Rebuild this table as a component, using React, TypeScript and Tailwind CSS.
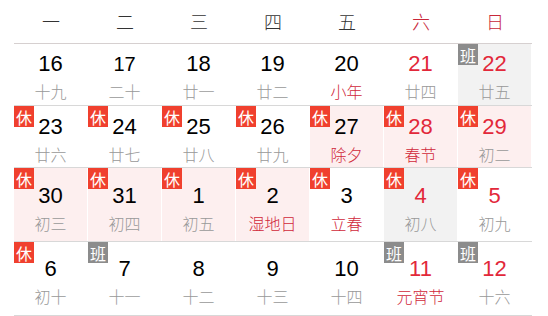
import React from "react";

type Cell = {
  d: string;
  l: string;
  badge?: "休" | "班";
  bg?: "pink" | "gray";
  red?: boolean;
  fest?: boolean;
  small?: boolean;
};

const rows: { h: string; pt: string; cells: Cell[] }[] = [
  {
    h: "h-[62px]",
    pt: "pt-[8px]",
    cells: [
      { d: "16", l: "十九" },
      { d: "17", l: "二十", small: true },
      { d: "18", l: "廿一" },
      { d: "19", l: "廿二" },
      { d: "20", l: "小年", fest: true },
      { d: "21", l: "廿四", red: true },
      { d: "22", l: "廿五", red: true, badge: "班", bg: "gray" },
    ],
  },
  {
    h: "h-[62px]",
    pt: "pt-[9px]",
    cells: [
      { d: "23", l: "廿六", badge: "休" },
      { d: "24", l: "廿七", badge: "休" },
      { d: "25", l: "廿八", badge: "休" },
      { d: "26", l: "廿九", badge: "休" },
      { d: "27", l: "除夕", badge: "休", bg: "pink", fest: true },
      { d: "28", l: "春节", badge: "休", bg: "pink", fest: true, red: true },
      { d: "29", l: "初二", badge: "休", bg: "pink", red: true },
    ],
  },
  {
    h: "h-[74px]",
    pt: "pt-[16px]",
    cells: [
      { d: "30", l: "初三", badge: "休", bg: "pink" },
      { d: "31", l: "初四", badge: "休", bg: "pink" },
      { d: "1", l: "初五", badge: "休", bg: "pink" },
      { d: "2", l: "湿地日", badge: "休", bg: "pink", fest: true },
      { d: "3", l: "立春", badge: "休", fest: true },
      { d: "4", l: "初八", badge: "休", bg: "gray", red: true },
      { d: "5", l: "初九", badge: "休", red: true },
    ],
  },
  {
    h: "h-[74px]",
    pt: "pt-[15px]",
    cells: [
      { d: "6", l: "初十", badge: "休" },
      { d: "7", l: "十一", badge: "班" },
      { d: "8", l: "十二" },
      { d: "9", l: "十三" },
      { d: "10", l: "十四" },
      { d: "11", l: "元宵节", badge: "班", red: true, fest: true },
      { d: "12", l: "十六", badge: "班", red: true },
    ],
  },
];

const heads = ["一", "二", "三", "四", "五", "六", "日"];

function DayCell({ c, pt }: { c: Cell; pt: string }) {
  const bg =
    c.bg === "pink" ? "bg-[#fdefef]" : c.bg === "gray" ? "bg-[#f2f2f2]" : "bg-white";
  return (
    <div className={`relative h-full border-r border-white ${bg} ${pt} flex flex-col items-center`}>
      {c.badge && (
        <div
          className={`absolute left-0 top-0 w-[20px] h-[21px] flex items-center justify-center text-[16px] leading-none text-white ${
            c.badge === "休" ? "bg-[#f0402e]" : "bg-[#8c8c8c]"
          }`}
          style={{ fontFamily: '"Noto Sans CJK SC", sans-serif' }}
        >
          {c.badge}
        </div>
      )}
      <div
        className={`h-[24px] leading-[24px] ${c.small ? "text-[20px]" : "text-[22px]"} ${
          c.red ? "text-[#e2283a]" : "text-black"
        }`}
        style={{ fontFamily: '"Liberation Sans", Arial, sans-serif' }}
      >
        {c.d}
      </div>
      <div
        className={`mt-[5px] h-[20px] leading-[20px] text-[16px] font-light ${
          c.fest ? "text-[#d0283a]" : "text-[#999]"
        }`}
        style={{ fontFamily: '"Noto Sans CJK SC", sans-serif' }}
      >
        {c.l}
      </div>
    </div>
  );
}

export default function App() {
  return (
    <div className="w-[548px] h-[316px] bg-white overflow-hidden">
      <div className="ml-[14px] w-[518px]">
        <div className="grid grid-cols-7 h-[44px] border-b border-[#d6d0d0]">
          {heads.map((h, i) => (
            <div
              key={h}
              className={`flex items-center justify-center text-[18px] font-light pb-[1px] ${
                i >= 5 ? "text-[#c8283a]" : "text-[#333]"
              }`}
              style={{ fontFamily: '"Noto Sans CJK SC", sans-serif' }}
            >
              {h}
            </div>
          ))}
        </div>
        {rows.map((r, ri) => (
          <div key={ri} className={`grid grid-cols-7 ${r.h} border-b border-[#d8d8d8]`}>
            {r.cells.map((c, ci) => (
              <DayCell key={ci} c={c} pt={r.pt} />
            ))}
          </div>
        ))}
      </div>
    </div>
  );
}
